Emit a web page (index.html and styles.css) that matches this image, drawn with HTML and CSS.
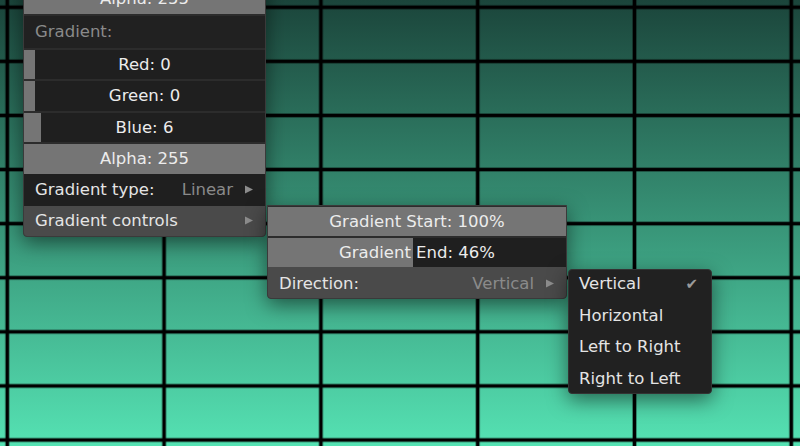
FILE: index.html
```html
<!DOCTYPE html>
<html>
<head>
<meta charset="utf-8">
<link rel="stylesheet" href="styles.css">
</head>
<body>
<div class="scene">
  <div class="menu menu-main">
    <div class="slider"><div class="fill" style="width:100%"></div><span class="stext">Alpha: 255</span></div>
    <div class="label">Gradient:</div>
    <div class="slider"><div class="fill" style="width:11px"></div><span class="stext">Red: 0</span></div>
    <div class="slider"><div class="fill" style="width:11px"></div><span class="stext">Green: 0</span></div>
    <div class="slider"><div class="fill" style="width:17px"></div><span class="stext">Blue: 6</span></div>
    <div class="slider last"><div class="fill" style="width:100%"></div><span class="stext">Alpha: 255</span></div>
    <div class="item"><span>Gradient type:</span><span class="value">Linear</span><svg class="arrow" width="8" height="9" viewBox="0 0 8 9"><path d="M0 0.5 L8 4.5 L0 8.5Z"/></svg></div>
    <div class="item hover bottom"><span>Gradient controls</span><svg class="arrow push" width="8" height="9" viewBox="0 0 8 9"><path d="M0 0.5 L8 4.5 L0 8.5Z"/></svg></div>
  </div>

  <div class="menu menu-sub">
    <div class="slider thin"><div class="fill" style="width:100%"></div><span class="stext">Gradient Start: 100%</span></div>
    <div class="slider thin last"><div class="fill" style="width:145px"></div><span class="stext">Gradient End: 46%</span></div>
    <div class="item hover bottom dir"><span>Direction:</span><span class="value">Vertical</span><svg class="arrow" width="8" height="9" viewBox="0 0 8 9"><path d="M0 0.5 L8 4.5 L0 8.5Z"/></svg></div>
  </div>

  <div class="menu menu-dir">
    <div class="opt"><span>Vertical</span><span class="check">✔</span></div>
    <div class="opt"><span>Horizontal</span></div>
    <div class="opt"><span>Left to Right</span></div>
    <div class="opt"><span>Right to Left</span></div>
  </div>
</div>
</body>
</html>
```

FILE: styles.css
```css
html, body {
  margin: 0;
  padding: 0;
}
body {
  width: 800px;
  height: 446px;
  overflow: hidden;
  font-family: "DejaVu Sans", sans-serif;
  font-size: 16.5px;
  color: #e4e4e4;
}
.scene {
  position: relative;
  width: 800px;
  height: 446px;
  overflow: hidden;
  background:
    linear-gradient(to right, rgba(0,0,0,0.35) 0 1px, #000 1px 3.5px, rgba(0,0,0,0.35) 3.5px 4.5px, transparent 4.5px),
    linear-gradient(to bottom, rgba(0,0,0,0.35) 0 1px, #000 1px 3.5px, rgba(0,0,0,0.35) 3.5px 4.5px, transparent 4.5px),
    linear-gradient(to bottom, #1b453b, #55e2b3);
  background-size: 156.8px 100%, 100% 54.1px, 100% 100%;
  background-position: 4.8px 0, 0 4.8px, 0 0;
  background-repeat: repeat-x, repeat-y, no-repeat;
}
.menu {
  position: absolute;
  background: #2c2c2c;
  border: 1px solid #3a3a3a;
  box-sizing: border-box;
  box-shadow: 0 6px 20px rgba(0,0,0,0.5);
  display: flex;
  flex-direction: column;
}
.menu-main {
  left: 23px;
  top: -19px;
  width: 243px;
  padding-top: 2px;
  border-radius: 0 0 4px 4px;
}
.menu-sub {
  left: 267px;
  top: 205px;
  width: 300px;
  padding-top: 1px;
  border-radius: 0 0 4px 4px;
}
.menu-dir {
  left: 568px;
  top: 269px;
  width: 144px;
  height: 125px;
  background: #212121;
  border-radius: 4px;
  border-color: #333;
}
.slider {
  position: relative;
  height: 29.5px;
  margin-bottom: 2px;
  background: #1f1f1f;
  display: flex;
  align-items: center;
  justify-content: center;
}
.slider.thin {
  height: 29px;
}
.slider.last {
  margin-bottom: 0;
}
.fill {
  position: absolute;
  left: 0;
  top: 0;
  bottom: 0;
  background: #757575;
}
.stext {
  position: relative;
  color: #ececec;
}
.label {
  height: 32px;
  margin-bottom: 2px;
  background: #212121;
  color: #8a8a8a;
  display: flex;
  align-items: center;
  padding-left: 11px;
}
.item {
  height: 32px;
  background: #1f1f1f;
  display: flex;
  align-items: center;
  padding: 0 12px 0 11px;
}
.item.hover {
  background: #4a4a4a;
}
.item.bottom {
  height: 30px;
  border-radius: 0 0 3px 3px;
}
.item.dir {
  padding-top: 1px;
}
.value {
  margin-left: auto;
  color: #8a8a8a;
}
.arrow {
  margin-left: 12px;
  fill: #8c8c8c;
}
.arrow.push {
  margin-left: auto;
}
.opt {
  flex-shrink: 0;
  height: 31.67px;
  box-sizing: border-box;
  display: flex;
  align-items: center;
  padding: 0 13px 0 10px;
}
.opt:first-child {
  margin-top: -2.3px;
}
.check {
  margin-left: auto;
  color: #9a9a9a;
  font-size: 15px;
}
```
